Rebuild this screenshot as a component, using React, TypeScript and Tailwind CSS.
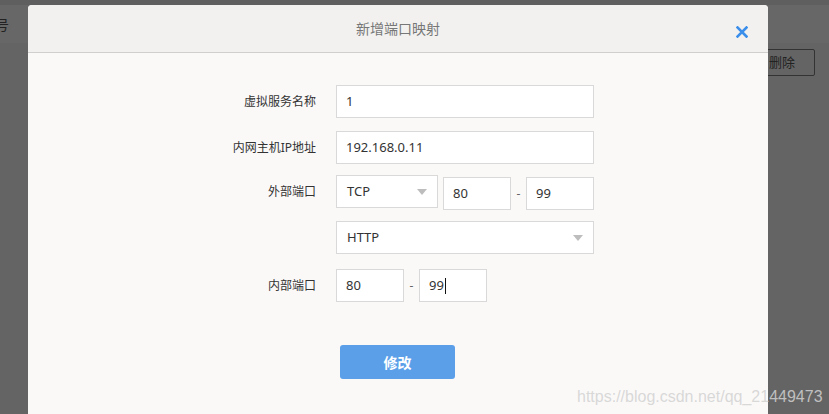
import React from 'react';

const font = { fontFamily: '"Noto Sans", "Noto Sans CJK SC", sans-serif' };

const Caret = () => (
  <svg width="10" height="6" viewBox="0 0 10 6" className="shrink-0">
    <path d="M0 0 L10 0 L5 6 Z" fill="#bdbdbd" />
  </svg>
);

const Field = ({ value, className = '', cursor = false }: any) => (
  <div className={`h-[33px] bg-white border border-[#d9d9d9] flex items-center pl-[9px] text-[13px] text-[#333] ${className}`}>
    {value}
    {cursor && <span className="inline-block w-px h-[16px] bg-[#111] ml-px" />}
  </div>
);

const Select = ({ value, className = '' }: any) => (
  <div className={`h-[33px] bg-white border border-[#d9d9d9] flex items-center justify-between pl-[10px] pr-[10px] text-[13px] text-[#333] ${className}`}>
    <span>{value}</span>
    <Caret />
  </div>
);

const Row = ({ label, children, className = '' }: any) => (
  <div className={`flex items-start ${className}`}>
    <div className="w-[308px] h-[33px] pr-[20px] flex items-center justify-end text-[12px] text-[#333]">{label}</div>
    {children}
  </div>
);

const Dash = ({ w }: any) => (
  <span className={`${w} h-[33px] flex items-center justify-center text-[12px] text-[#666]`}>-</span>
);

export default function App() {
  return (
    <div className="relative w-[829px] h-[414px] overflow-hidden bg-[#646464]" style={font}>
      {/* page behind the overlay */}
      <div className="h-[43px] bg-[#676767] border-t-[5px] border-[#5f5f5f]" />
      <div className="absolute left-[-5px] top-[14px] text-[14px] text-[#222]">号</div>
      <div className="absolute left-[760px] top-[49px] w-[55px] h-[27px] border border-[#333] rounded-[2px] flex items-center justify-end pr-[19px] text-[13px] text-[#222]">
        删除
      </div>

      {/* modal */}
      <div className="absolute left-[28px] top-[5px] w-[740px] h-[420px] bg-[#faf9f8] rounded-t-[4px] overflow-hidden">
        <div className="relative h-[48px] bg-[#f2f1f0] border-b border-[#cfcfcf] flex items-center justify-center">
          <span className="text-[14px] text-[#777]">新增端口映射</span>
          <svg className="absolute left-[708px] top-[21px]" width="12" height="12" viewBox="0 0 12 12">
            <path d="M1.5 1.5 L10.5 10.5 M10.5 1.5 L1.5 10.5" stroke="#3b8eea" strokeWidth="2.6" strokeLinecap="square" />
          </svg>
        </div>

        <div className="pt-[32px]">
          <Row label="虚拟服务名称">
            <Field value="1" className="w-[258px]" />
          </Row>
          <Row label="内网主机IP地址" className="mt-[13px]">
            <Field value="192.168.0.11" className="w-[258px]" />
          </Row>
          <Row label="外部端口" className="mt-[11px]">
            <Select value="TCP" className="w-[102px]" />
            <div className="flex items-center ml-[5px] mt-[2px]">
              <Field value="80" className="w-[68px]" />
              <Dash w="w-[15px]" />
              <Field value="99" className="w-[68px]" />
            </div>
          </Row>
          <Row label="" className="mt-[11px]">
            <Select value="HTTP" className="w-[258px]" />
          </Row>
          <Row label="内部端口" className="mt-[15px]">
            <Field value="80" className="w-[68px]" />
            <Dash w="w-[15px]" />
            <Field value="99" className="w-[68px]" cursor />
          </Row>

          <div className="pl-[312px] mt-[43px]">
            <button className="w-[115px] h-[34px] rounded-[3px] bg-[#5b9fe9] text-white text-[14px] font-bold">
              修改
            </button>
          </div>
        </div>
      </div>

      {/* watermark */}
      <div
        className="absolute left-[577px] top-[385px] text-[16px] text-[rgba(210,210,210,0.85)]"
        style={{ fontFamily: '"Liberation Sans", Arial, sans-serif' }}
      >
        https://blog.csdn.net/qq_21449473
      </div>
    </div>
  );
}
